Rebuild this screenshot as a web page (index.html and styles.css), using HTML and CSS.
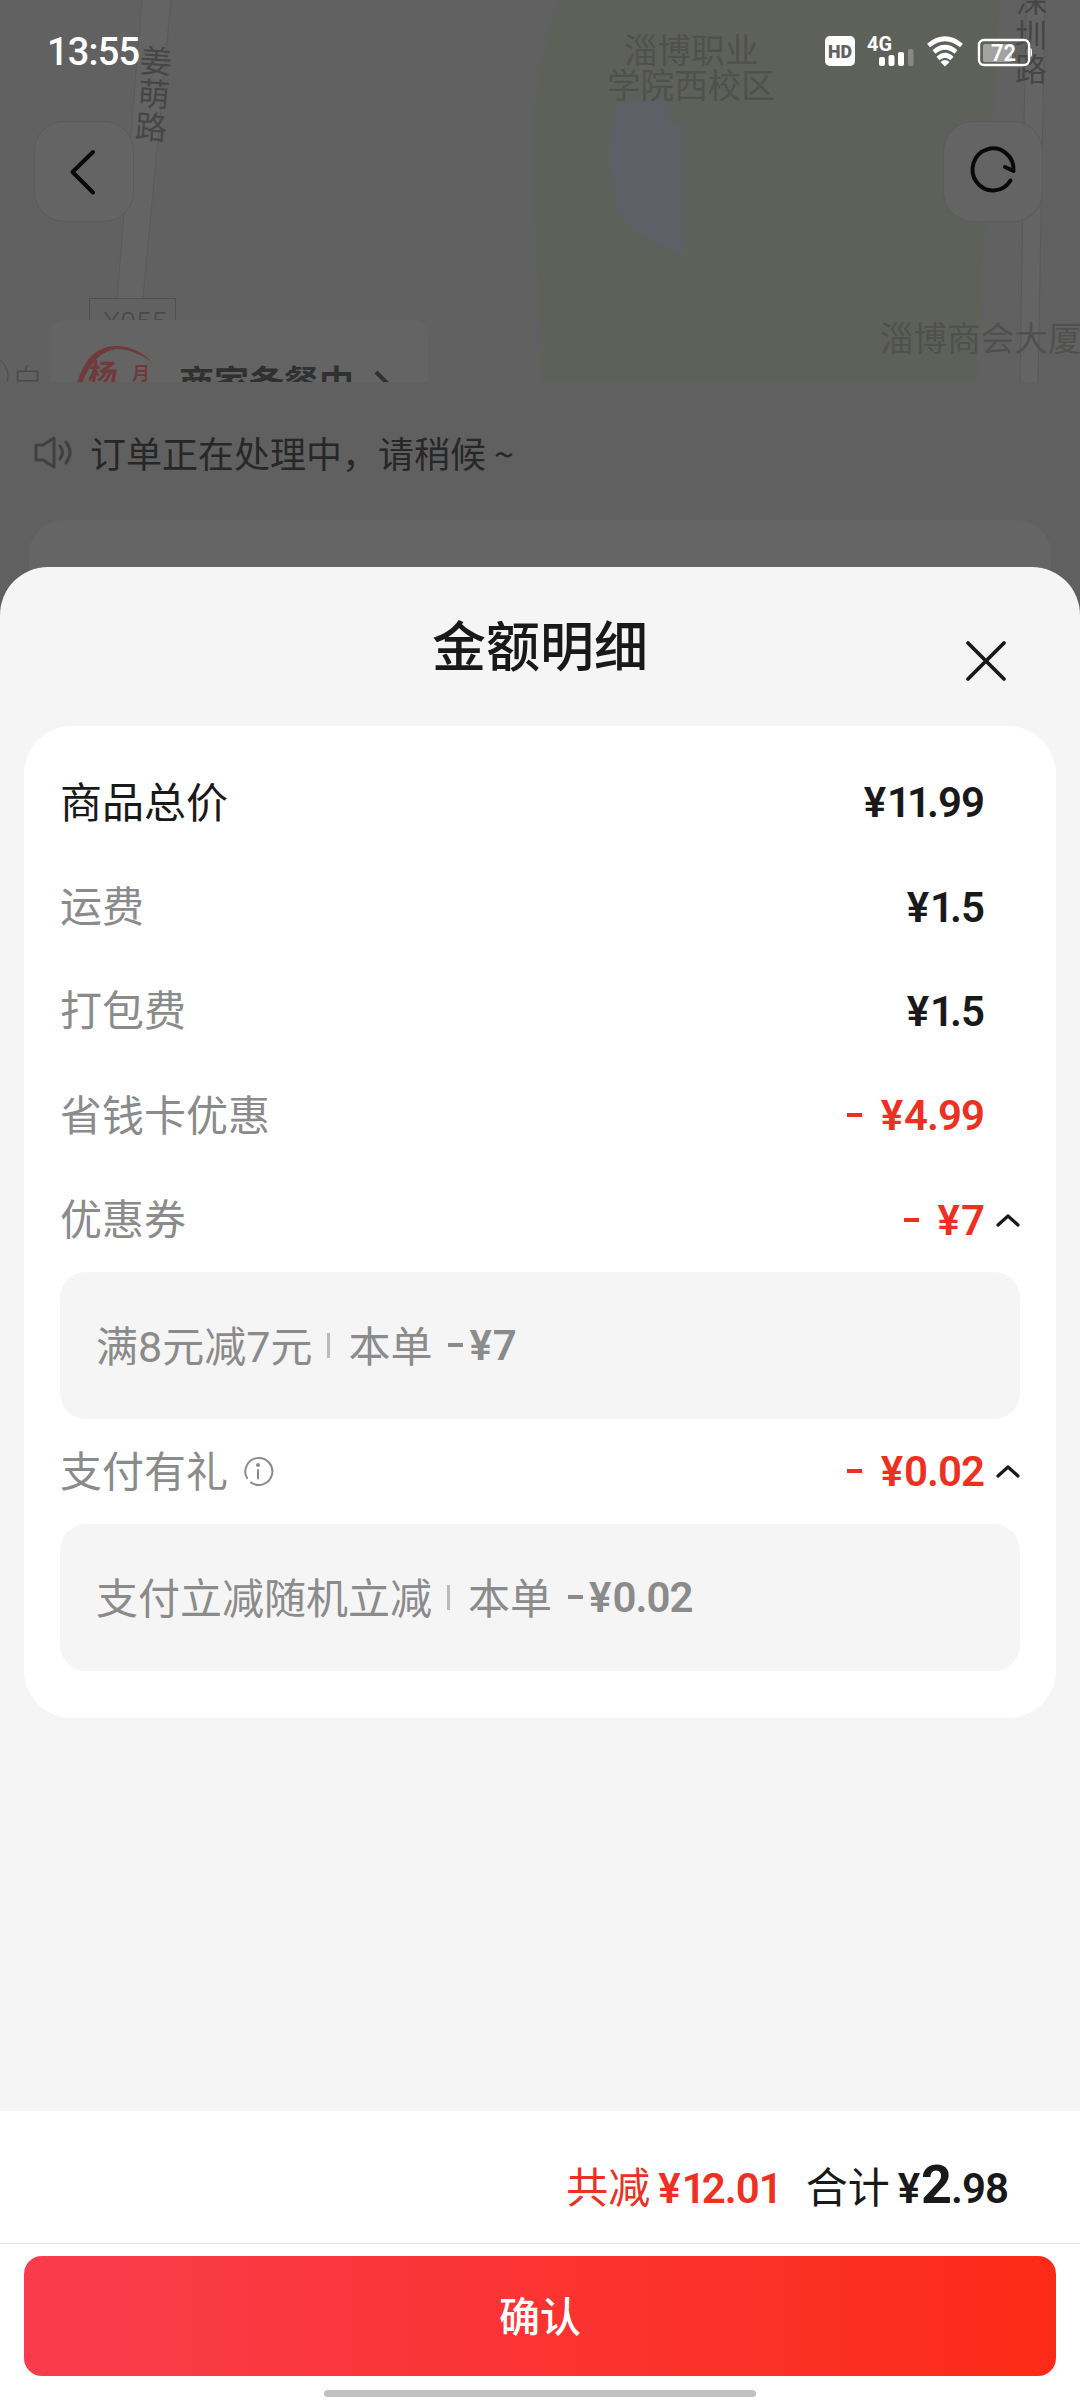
FILE: index.html
```
<!DOCTYPE html>
<html lang="zh-CN">
<head>
<meta charset="utf-8">
<title>金额明细</title>
<link rel="stylesheet" href="styles.css">
</head>
<body>
<div class="screen">
  <div class="backdrop">
    <section class="map">
      <svg class="map-art" width="1080" height="382" viewBox="0 0 1080 382">
        <path d="M560 0Q538 60 535 110Q533 240 543 382H976L985 220L992 120L1000 0Z" fill="#5e605a"/>
        <path d="M630 100H668V122H683V254Q650 248 620 215Q600 160 616 112Z" fill="#5f6067"/>
        <path d="M142 0H171L143 298L138 340H112L117 298Z" fill="#646464"/>
        <path d="M142 0L117 298M171 0L143 298" stroke="#5a5a5a" fill="none"/>
        <path d="M1026 0H1046L1038 382H1020Z" fill="#646464"/>
        <path d="M1026 0L1020 382M1045 0L1038 382" stroke="#595959" fill="none"/>
        <rect x="89.500" y="298.500" width="86" height="50" fill="#616161" stroke="#505050"/>
        <g class="road">
          <text x="140" y="73" transform="rotate(4 156 62)">姜</text>
          <text x="138" y="106" transform="rotate(4 154 95)">萌</text>
          <text x="135" y="139" transform="rotate(4 151 128)">路</text>
          <text x="1016" y="12">深</text>
          <text x="1015" y="47">圳</text>
          <text x="1015" y="81">路</text>
        </g>
        <g class="place">
          <text x="624" y="63">淄博职业</text>
          <text x="607" y="98">学院西校区</text>
          <text x="880" y="351">淄博商会大厦</text>
        </g>
        <text class="code" x="103" y="332">X055</text>
        <text class="near" x="12" y="391">白</text>
        <circle cx="-12" cy="376" r="20" fill="none" stroke="#4d4d4d"/>
      </svg>
      <div class="merchant">
        <svg class="logo" width="80" height="62" viewBox="0 0 80 62">
          <path d="M3 43Q14 6 42 6Q62 6 78 22Q60 9 42 9Q20 12 8 43Z" fill="#703a3a"/>
          <text x="18" y="45" font-size="29" transform="skewX(-6)">杨</text>
          <text x="58" y="40" font-size="18">月</text>
        </svg>
        <span>商家备餐中</span>
        <svg width="16" height="30" viewBox="0 0 16 30"><path d="M2 3L12 13L2 23" fill="none" stroke="#303030" stroke-width="4"/></svg>
      </div>
    </section>
    <header class="nav">
      <div class="nav-btn"><svg width="98" height="99" viewBox="0 0 98 99"><path d="M58 30L37.500 50L58 70.500"/></svg></div>
      <div class="nav-btn"><svg width="98" height="99" viewBox="0 0 98 99"><path d="M66.500 58.500A20.500 21 0 1 1 69.500 49L61 45"/></svg></div>
    </header>
    <div class="status">
      <span class="time">13:55</span>
      <svg width="210" height="36" viewBox="0 0 210 36">
        <rect x="3" y="3" width="30" height="30" rx="5" fill="#fff"/>
        <text x="6" y="25" font-size="19" font-weight="900" textLength="24" lengthAdjust="spacingAndGlyphs" fill="#616161">HD</text>
        <text x="45" y="18" font-size="21" font-weight="700" textLength="25" lengthAdjust="spacingAndGlyphs" fill="#fff">4G</text>
        <g fill="#fff">
          <rect x="57" y="24" width="6" height="9" rx="2"/><rect x="66.500" y="22" width="6" height="11" rx="2"/><rect x="76" y="19" width="6" height="14" rx="2"/>
          <rect x="86" y="16" width="5.500" height="17" rx="2" opacity=".25"/>
        </g>
        <g fill="none" stroke="#fff" stroke-width="4.600">
          <path d="M106.500 12.500Q123 -1 139.500 12.500"/><path d="M112 19Q123 9.500 134 19"/><path d="M116 25.500Q123 19 130 25.500"/>
        </g>
        <path d="M118.500 29Q123 25 127.500 29L123 33.500Z" fill="#fff"/>
        <rect x="157" y="7" width="50" height="25" rx="5" fill="none" stroke="#fff" stroke-width="2.400"/>
        <rect x="161" y="11" width="29" height="18" rx="2" fill="#a2a39f"/>
        <path d="M208.500 15Q210 15 210 19.500Q210 24 208.500 24Z" fill="#fff"/>
        <text x="169" y="28" font-size="23" font-weight="600" textLength="25" lengthAdjust="spacingAndGlyphs" fill="#fff">72</text>
      </svg>
    </div>
    <div class="notice">
      <svg width="42" height="34" viewBox="0 0 42 34" fill="none" stroke="#404040" stroke-width="3">
        <path d="M3 10H10L21 3V32L10 25H3Z" stroke-linejoin="round"/><path d="M27 11Q32 17.500 27 24M33 7Q41 17.500 33 28" stroke-linecap="round"/>
      </svg>
      <span>订单正在处理中，请稍候</span><span class="tilde">~</span>
    </div>
    <div class="under-card"></div>
  </div>

  <main class="sheet">
    <div class="sheet-head">
      <h1>金额明细</h1>
      <svg class="close" width="42" height="42" viewBox="0 0 42 42"><path d="M3 3L39 39M39 3L3 39"/></svg>
    </div>
    <section class="card">
      <div class="row"><span class="label dark">商品总价</span><span class="price"><u>¥</u><i>1</i><i>1</i>.99</span></div>
      <div class="row"><span class="label">运费</span><span class="price"><u>¥</u><i>1</i>.5</span></div>
      <div class="row"><span class="label">打包费</span><span class="price"><u>¥</u><i>1</i>.5</span></div>
      <div class="row"><span class="label">省钱卡优惠</span><b class="minus"></b><span class="price red"><u>¥</u>4.99</span></div>
      <div class="row"><span class="label">优惠券</span><b class="minus"></b><span class="price red"><u>¥</u>7</span><svg class="up" width="26" height="16" viewBox="0 0 26 16"><path d="M3 13L13 4L23 13"/></svg></div>
      <div class="detail"><span class="name">满<em>8</em>元减<em>7</em>元</span><b class="bar"></b><span>本单</span><b class="minus"></b><span class="price"><u>¥</u>7</span></div>
      <div class="row tall"><span class="label">支付有礼</span>
        <svg class="info" width="32" height="32" viewBox="0 0 32 32"><path d="M5 23A13.500 13.500 0 1 1 9 27.500"/><path d="M16 15V23.500"/><circle cx="16" cy="10" r="2"/></svg>
        <b class="minus"></b><span class="price red"><u>¥</u>0.02</span><svg class="up" width="26" height="16" viewBox="0 0 26 16"><path d="M3 13L13 4L23 13"/></svg></div>
      <div class="detail"><span class="name">支付立减随机立减</span><b class="bar"></b><span>本单</span><b class="minus"></b><span class="price"><u>¥</u>0.02</span></div>
    </section>
    <footer class="foot">
      <div class="totals">
        <span class="red">共减</span><span class="price red"><u>¥</u><i>1</i>2.0<i>1</i></span>
        <span class="sum">合计</span><span class="price"><u>¥</u><strong>2</strong>.98</span>
      </div>
      <div class="action"><button class="confirm">确认</button><div class="home"></div></div>
    </footer>
  </main>
</div>
</body>
</html>
```
FILE: styles.css
```
* { box-sizing: border-box; }
body { margin: 0; font-family: Roboto, "Noto Sans CJK SC", sans-serif; }
svg { display: block; flex: none; }
.screen { position: relative; width: 1080px; height: 2400px; overflow: hidden; background: #606060; }

.backdrop { height: 567px; }
.map { position: relative; height: 382px; background: #616161; overflow: hidden; }
.map-art text { font-family: "Noto Sans CJK SC", sans-serif; }
.road { fill: #464646; font-size: 32px; }
.place { fill: #50514f; font-size: 33.6px; }
.map-art .code { font-family: Roboto, sans-serif; fill: #484848; font-size: 28px; font-weight: 300; }
.near { fill: #4a4a4a; font-size: 31px; font-weight: 300; }
.merchant { position: absolute; left: 50px; top: 320px; width: 378px; height: 100px; border-radius: 14px; background: #646464; display: flex; align-items: flex-start; padding: 23px 0 0 24px; color: #303030; font: bold 35px/1 "Noto Sans CJK SC", sans-serif; }
.merchant span { margin: 20px 20px 0 25px; }
.merchant > svg:last-child { margin-top: 26px; }
.logo { fill: #703a3a; margin: -3px 0 0; font-weight: 700; }

.nav { position: absolute; left: 34px; top: 121px; width: 1009px; display: flex; justify-content: space-between; }
.nav-btn { width: 100px; height: 101px; border-radius: 30px; background: #646464; border: 1px solid #5b5b5b; }
.nav-btn path { fill: none; stroke: #090909; stroke-width: 4; stroke-linecap: round; stroke-linejoin: round; }
.status { position: absolute; left: 47px; top: 33px; width: 985px; height: 36px; display: flex; justify-content: space-between; align-items: center; color: #fff; }
.time { padding-top: 2px; font-size: 38px; font-weight: 500; letter-spacing: -.8px; }

.notice { height: 138px; padding: 2px 0 0 33px; display: flex; align-items: center; font: 36px/54px "Noto Sans CJK SC", sans-serif; color: #272727; }
.notice svg { margin-right: 15px; }
.tilde { margin-left: 8px; }
.under-card { height: 100px; margin: 0 29px; border-radius: 34px 34px 0 0; background: #656565; }

.sheet { position: absolute; left: 0; top: 567px; width: 1080px; height: 1833px; border-radius: 48px 48px 0 0; background: #f5f5f5; display: flex; flex-direction: column; overflow: hidden; }
.sheet-head { position: relative; height: 159px; flex: none; }
h1 { margin: 0; padding-top: 38px; text-align: center; font: 500 54px/78px "Noto Sans CJK SC", sans-serif; color: #191919; }
.close { position: absolute; right: 73px; top: 73px; }
.close path { fill: none; stroke: #191919; stroke-width: 3.800; stroke-linecap: round; }
.card { margin: 0 24px; padding: 24px 36px 47px; border-radius: 48px; background: #fff; color: #8b8b8b; }
.row { position: relative; height: 104.4px; display: flex; align-items: center; padding-right: 36px; }
.row.tall { height: 105.6px; }
.label, .detail, .totals { font-family: "Noto Sans CJK SC", sans-serif; font-size: 42px; line-height: 60px; }
.label { margin-right: auto; padding-bottom: 5px; white-space: nowrap; }
.dark { color: #191919; }
.price { padding-top: 2px; font-family: Roboto, sans-serif; font-size: 42px; line-height: 60px; font-weight: 600; letter-spacing: -1px; color: #191919; white-space: nowrap; }
.price u { text-decoration: none; letter-spacing: 1px; }
.price i { font-style: normal; letter-spacing: -4px; }
.red, .price.red { color: #ee3022; }
.minus { width: 15px; height: 4px; background: currentColor; flex: none; }
.row .minus { background: #ee3022; margin-right: 19px; }
.up { position: absolute; right: -1px; top: 44px; }
.up path { fill: none; stroke: #191919; stroke-width: 3.200; stroke-linecap: round; stroke-linejoin: round; }
.tall .label { margin-right: 14px; }
.tall .minus { margin-left: auto; }
.info path { fill: none; stroke: #8b8b8b; stroke-width: 2; stroke-linecap: round; }
.info circle { fill: #8b8b8b; }
.detail { height: 146.6px; border-radius: 26px; background: #f5f5f5; display: flex; align-items: center; padding-left: 36px; }
.detail span:not(.price) { padding-bottom: 3px; }
.detail em { font: 43px/1 Roboto, sans-serif; }
.detail .bar { width: 3px; height: 25px; background: #bbb; margin: 0 18px 0 15px; }
.detail .minus { margin: 0 6px 0 16px; }
.detail .price { color: #8b8b8b; }

.foot { margin-top: auto; background: #fff; height: 289px; flex: none; }
.totals { height: 133px; border-bottom: 1px solid #e3e5e6; padding: 44px 72px 0 0; display: flex; justify-content: flex-end; align-items: baseline; color: #191919; }
.totals .price { margin-left: 8px; padding: 0; }
.sum { margin-left: 27px; }
.totals strong { font-size: 54px; font-weight: 700; }
.action { padding: 12px 24px 0; }
.confirm { display: block; width: 100%; height: 120px; border: 0; border-radius: 18px; padding: 0 0 4px; background: linear-gradient(90deg, #f93c4d, #fc2b17); color: #fff; font: 500 41px/116px "Noto Sans CJK SC", sans-serif; }
.home { width: 432px; height: 7px; border-radius: 4px; background: #c1c1c1; margin: 14px auto 0; }
```
